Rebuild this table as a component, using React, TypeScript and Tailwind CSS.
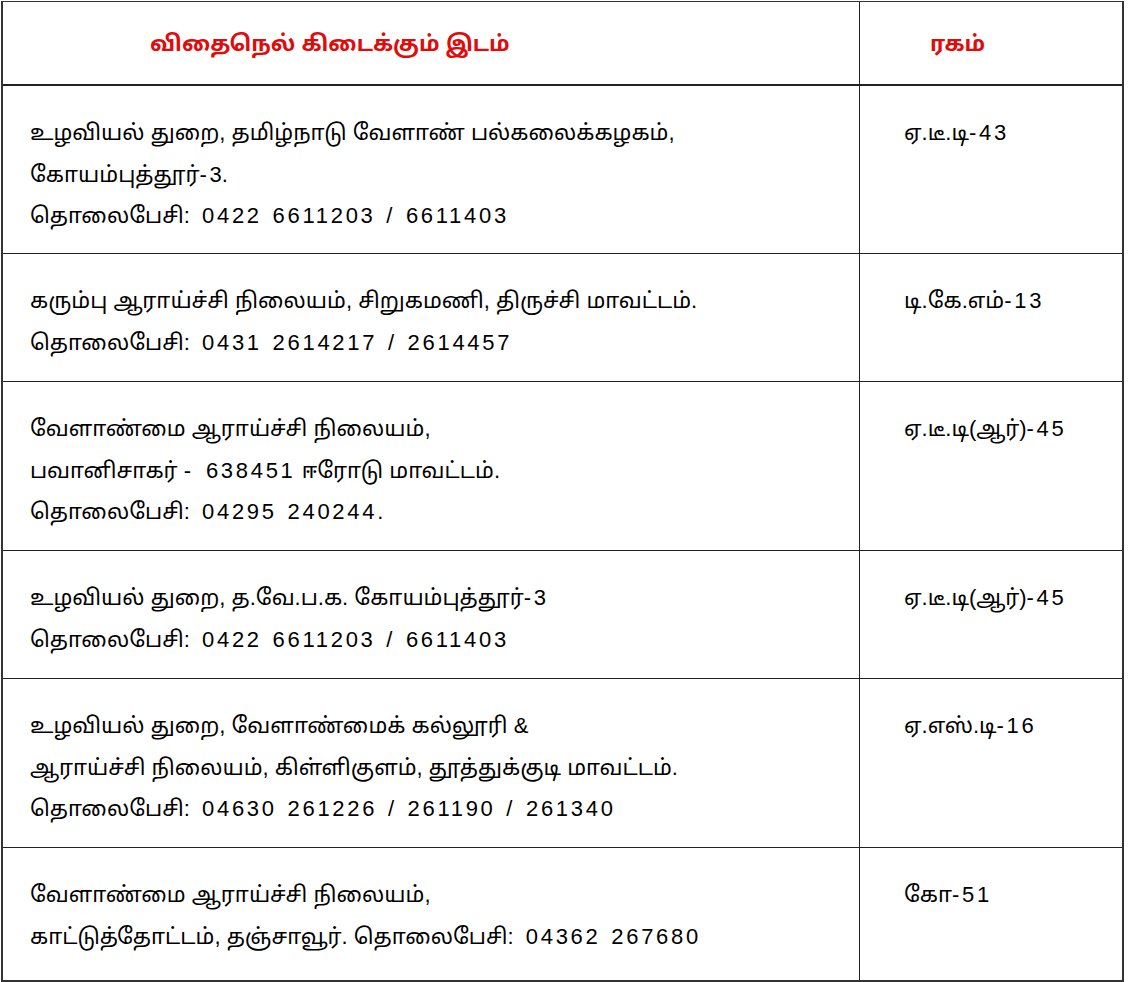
const ROWS = [
  {
    h: "h-[168px]",
    lines: [
      "உழவியல் துறை, தமிழ்நாடு வேளாண் பல்கலைக்கழகம்,",
      "கோயம்புத்தூர்-3.",
      "தொலைபேசி: 0422 6611203 / 6611403",
    ],
    variety: "ஏ.டீ.டி-43",
  },
  {
    h: "h-[128px]",
    lines: [
      "கரும்பு ஆராய்ச்சி நிலையம், சிறுகமணி, திருச்சி மாவட்டம்.",
      "தொலைபேசி: 0431 2614217 / 2614457",
    ],
    variety: "டி.கே.எம்-13",
  },
  {
    h: "h-[169px]",
    lines: [
      "வேளாண்மை ஆராய்ச்சி நிலையம்,",
      "பவானிசாகர் - 638451 ஈரோடு மாவட்டம்.",
      "தொலைபேசி: 04295 240244.",
    ],
    variety: "ஏ.டீ.டி(ஆர்)-45",
  },
  {
    h: "h-[128px]",
    lines: [
      "உழவியல் துறை, த.வே.ப.க. கோயம்புத்தூர்-3",
      "தொலைபேசி: 0422 6611203 / 6611403",
    ],
    variety: "ஏ.டீ.டி(ஆர்)-45",
  },
  {
    h: "h-[169px]",
    lines: [
      "உழவியல் துறை, வேளாண்மைக் கல்லூரி &",
      "ஆராய்ச்சி நிலையம், கிள்ளிகுளம், தூத்துக்குடி மாவட்டம்.",
      "தொலைபேசி: 04630 261226 / 261190 / 261340",
    ],
    variety: "ஏ.எஸ்.டி-16",
  },
  {
    h: "h-[132px]",
    lines: [
      "வேளாண்மை ஆராய்ச்சி நிலையம்,",
      "காட்டுத்தோட்டம், தஞ்சாவூர். தொலைபேசி: 04362 267680",
    ],
    variety: "கோ-51",
  },
];

// phone numbers and codes are letter-spaced, as in the printed sheet
function Mixed({ text }: { text: string }) {
  const parts = text.split(/(-?[0-9][0-9 /]*[0-9]|-)/);
  return (
    <>
      {parts.map((p, i) => {
        if (i % 2 === 0) return p;
        const afterSpace = p[0] !== "-" && parts[i - 1].endsWith(" ");
        return (
          <span
            key={i}
            className={afterSpace ? "pl-[6px] tracking-[2.7px] [word-spacing:2px]" : "tracking-[2.7px] [word-spacing:2px]"}
          >
            {p}
          </span>
        );
      })}
    </>
  );
}

export default function App() {
  return (
    <div className="min-h-screen bg-white pt-px pl-px text-black">
      <div className="grid w-[1123px] grid-cols-[857px_1fr] border-2 border-t-[1.5px] border-[#333] font-['Liberation_Sans','Noto_Sans_Tamil','Noto_Sans',sans-serif] text-[22px]">
        <div className="flex h-[84px] items-center border-r border-b-2 border-[#222] pl-[147px] text-[22px] font-bold text-[#e00b0b]">
          விதைநெல் கிடைக்கும் இடம்
        </div>
        <div className="flex h-[84px] items-center border-b-2 border-[#222] pl-[70px] text-[22px] font-bold text-[#e00b0b]">
          ரகம்
        </div>
        {ROWS.map((row, i) => {
          const last = i === ROWS.length - 1;
          return [
            <div
              key={`a${i}`}
              className={`${row.h} border-r border-[#222] pl-[27px] pt-[26px] leading-[41.5px] ${last ? "" : "border-b"}`}
            >
              {row.lines.map((l) => (
                <div key={l}>
                  <Mixed text={l} />
                </div>
              ))}
            </div>,
            <div
              key={`b${i}`}
              className={`${row.h} border-[#222] pl-[44px] pt-[26px] leading-[41.5px] ${last ? "" : "border-b"}`}
            >
              <Mixed text={row.variety} />
            </div>,
          ];
        })}
      </div>
    </div>
  );
}
